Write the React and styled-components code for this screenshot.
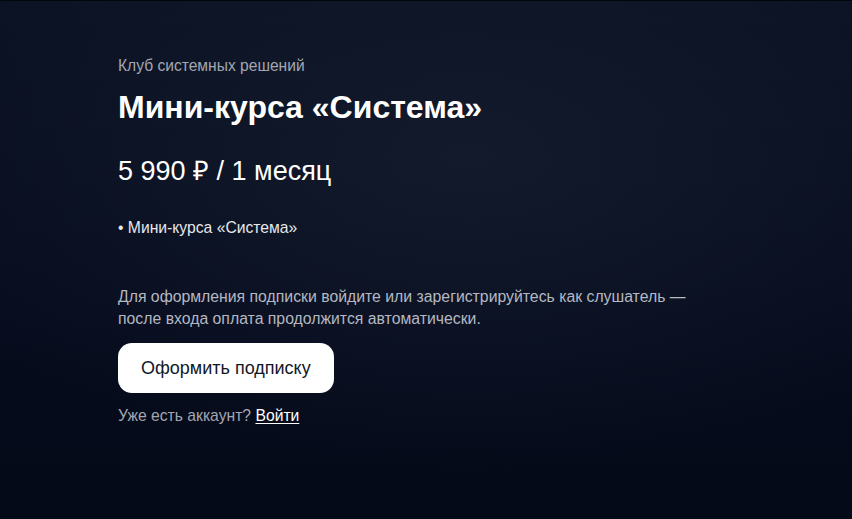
import styled, { createGlobalStyle } from "styled-components";

const Global = createGlobalStyle`
  html, body {
    margin: 0;
    padding: 0;
    height: 100%;
  }
  body {
    font-family: "Liberation Sans", Arial, sans-serif;
    background: #070c1c;
  }
`;

const Page = styled.div`
  min-height: 100vh;
  box-sizing: border-box;
  border-top: 1px solid #03050c;
  background:
    radial-gradient(ellipse 70% 60% at 55% 30%, #121a2b 0%, rgba(18, 26, 43, 0) 100%),
    linear-gradient(180deg, #0b1224 0%, #070c1e 60%, #050a18 100%);
  padding: 54px 118px 0;
`;

const Card = styled.div`
  max-width: 600px;
  display: flex;
  flex-direction: column;
`;

const Eyebrow = styled.div`
  font-size: 15.6px;
  color: #a3a7b1;
  line-height: 22px;
`;

const Title = styled.h1`
  margin: 10px 0 0;
  font-size: 32px;
  line-height: 40px;
  font-weight: 700;
  color: #ffffff;
`;

const Price = styled.div`
  margin-top: 26px;
  font-size: 27px;
  line-height: 36px;
  color: #ffffff;
`;

const Features = styled.ul`
  list-style: none;
  margin: 28px 0 0;
  padding: 0;
`;

const Feature = styled.li`
  font-size: 15.7px;
  line-height: 22px;
  color: #e6e8ec;
`;

const Note = styled.p`
  margin: 47px 0 0;
  font-size: 15.8px;
  line-height: 22px;
  color: #b4b8c2;
`;

const Button = styled.button`
  align-self: flex-start;
  margin-top: 13px;
  height: 50px;
  padding: 0 23px;
  border: none;
  border-radius: 14px;
  background: #ffffff;
  color: #111827;
  font-family: inherit;
  font-size: 18px;
  cursor: pointer;
`;

const Login = styled.div`
  margin-top: 12px;
  font-size: 15.7px;
  line-height: 22px;
  color: #a3a7b1;

  a {
    color: #ffffff;
    text-decoration: underline;
    text-underline-offset: 2px;
  }
`;

export default function App() {
  return (
    <>
      <Global />
      <Page>
        <Card>
          <Eyebrow>Клуб системных решений</Eyebrow>
          <Title>Мини-курса «Система»</Title>
          <Price>5 990 ₽ / 1 месяц</Price>
          <Features>
            <Feature>• Мини-курса «Система»</Feature>
          </Features>
          <Note>
            Для оформления подписки войдите или зарегистрируйтесь как слушатель —
            после входа оплата продолжится автоматически.
          </Note>
          <Button>Оформить подписку</Button>
          <Login>
            Уже есть аккаунт? <a href="#">Войти</a>
          </Login>
        </Card>
      </Page>
    </>
  );
}
